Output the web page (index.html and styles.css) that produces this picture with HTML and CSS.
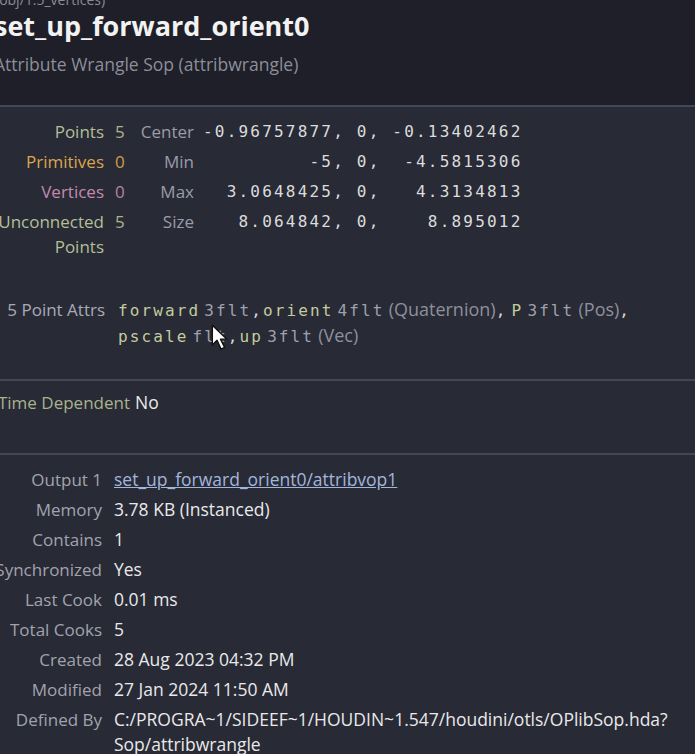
FILE: index.html
```html
<!DOCTYPE html>
<html lang="en">
<head>
    <meta charset="UTF-8">
    <meta name="viewport" content="width=device-width, initial-scale=1.0">
    <title>Node Info - set_up_forward_orient0</title>
    <link rel="stylesheet" href="styles.css">
</head>
<body>
    <div class="panel">
        <header class="node-head">
            <div class="path">/obj/1.5_vertices)</div>
            <h1 class="title">set_up_forward_orient0</h1>
            <div class="subtitle">Attribute Wrangle Sop (attribwrangle)</div>
        </header>

        <section class="block geo">
            <div class="stats">
                <div class="lbl pts">Points</div>
                <div class="num pts">5</div>
                <div class="slbl">Center</div>
                <div class="vec">-0.96757877, 0, -0.13402462</div>

                <div class="lbl prims">Primitives</div>
                <div class="num prims">0</div>
                <div class="slbl">Min</div>
                <div class="vec">         -5, 0,  -4.5815306</div>

                <div class="lbl verts">Vertices</div>
                <div class="num verts">0</div>
                <div class="slbl">Max</div>
                <div class="vec">  3.0648425, 0,   4.3134813</div>

                <div class="lbl pts">Unconnected<br>Points</div>
                <div class="num pts">5</div>
                <div class="slbl">Size</div>
                <div class="vec">   8.064842, 0,    8.895012</div>
            </div>

            <div class="attrs">
                <div class="lbl">5 Point Attrs</div>
                <div class="attr-list">
                    <span class="an">forward</span> <span class="at">3flt</span><span class="ac">,</span><span class="an">orient</span> <span class="at">4flt</span> <span class="ad">(Quaternion)</span><span class="ac">,</span> <span class="an">P</span> <span class="at">3flt</span> <span class="ad">(Pos)</span><span class="ac">,</span><br>
                    <span class="an">pscale</span> <span class="at">flt</span><span class="ac">,</span><span class="an">up</span> <span class="at">3flt</span> <span class="ad">(Vec)</span>
                </div>
            </div>
        </section>

        <section class="block time">
            <div class="info time-info">
                <div class="lbl">Time Dependent</div>
                <div class="val">No</div>
            </div>
        </section>

        <section class="block details">
            <div class="info">
                <div class="lbl">Output 1</div>
                <div class="val"><a href="#" class="node-link">set_up_forward_orient0/attribvop1</a></div>
                <div class="lbl">Memory</div>
                <div class="val">3.78 KB (Instanced)</div>
                <div class="lbl">Contains</div>
                <div class="val">1</div>
                <div class="lbl">Synchronized</div>
                <div class="val">Yes</div>
                <div class="lbl">Last Cook</div>
                <div class="val">0.01 ms</div>
                <div class="lbl">Total Cooks</div>
                <div class="val">5</div>
                <div class="lbl">Created</div>
                <div class="val">28 Aug 2023 04:32 PM</div>
                <div class="lbl">Modified</div>
                <div class="val">27 Jan 2024 11:50 AM</div>
                <div class="lbl">Defined By</div>
                <div class="val">C:/PROGRA~1/SIDEEF~1/HOUDIN~1.547/houdini/otls/OPlibSop.hda?<br>Sop/attribwrangle</div>
            </div>
        </section>
    </div>

    <!-- mouse pointer caught in the capture -->
    <svg class="cursor" width="19" height="28" viewBox="0 0 16 24">
        <path d="M1 1 L1 18 L5 14 L8.5 21.5 L11.5 20 L8 13 L13.5 13 Z" fill="#fff" stroke="#111" stroke-width="1.2" stroke-linejoin="round"/>
    </svg>
</body>
</html>
```

FILE: styles.css
```css
body {
    margin: 0;
    background-color: #282a36;
    font-family: "Open Sans", "Noto Sans", sans-serif;
    font-size: 17px;
    color: #e8e8e8;
    overflow: hidden;
}
.panel {
    margin-left: -6px;
}
.node-head {
    height: 107px;
    box-sizing: border-box;
    background-color: #1e1f28;
    border-bottom: 2px solid #44465a;
    overflow: hidden;
}
.path {
    font-size: 14px;
    line-height: 18px;
    margin-top: -9px;
    color: #8a8c98;
}
.title {
    margin: 0;
    font-size: 27px;
    line-height: 34px;
    font-weight: 700;
    color: #f2f2f2;
}
.subtitle {
    margin-top: 9px;
    font-size: 17.5px;
    line-height: 24px;
    color: #8c8e9a;
}
.block {
    border-top: 2px solid #44465a;
}
.geo {
    border-top: none;
    padding: 12px 0 30px;
}
.lbl {
    text-align: right;
    white-space: nowrap;
}
.stats {
    display: grid;
    grid-template-columns: 110px 25px 65px auto;
    row-gap: 5px;
    line-height: 25px;
    align-items: start;
}
.num {
    padding-left: 11px;
}
.slbl {
    text-align: right;
    color: #9a9ca8;
}
.vec {
    padding-left: 9px;
    white-space: pre;
    font-family: "DejaVu Sans Mono", monospace;
    font-size: 16px;
    letter-spacing: 2.2px;
    color: #dcdcdc;
}
.pts { color: #b3bf98; }
.prims { color: #dca54e; }
.verts { color: #c48aae; }
.num.pts { color: #a8b38f; }
.num.prims { color: #cf9c4a; }
.num.verts { color: #b8849f; }

.attrs {
    display: grid;
    grid-template-columns: 111px auto;
    margin-top: 38px;
    line-height: 25px;
}
.attrs .lbl {
    color: #a8aab6;
}
.attr-list {
    padding-left: 13px;
    font-size: 16px;
}
.an, .at, .ac {
    font-family: "DejaVu Sans Mono", monospace;
    font-size: 16px;
    letter-spacing: 2.1px;
}
.an { color: #c3cc9c; }
.at { color: #9fa1ad; }
.ac { color: #d8d8d8; }
.ad {
    color: #8e909c;
    font-size: 18px;
}

.info {
    display: grid;
    grid-template-columns: 108px auto;
    row-gap: 5px;
    line-height: 25px;
    align-items: start;
}
.info .lbl {
    color: #a2a3ae;
}
.info .val {
    padding-left: 12px;
    font-size: 17.5px;
    color: #e9e9e9;
}
.time {
    padding: 9px 0 38px;
}
.time-info {
    grid-template-columns: 136px auto;
}
.time-info .lbl {
    color: #a9b38e;
}
.time-info .val {
    padding-left: 5px;
}
.details {
    padding: 12px 0 20px;
}
.node-link {
    color: #a2b6dc;
    text-decoration: underline;
}
.cursor {
    position: absolute;
    left: 211px;
    top: 324px;
}
```
